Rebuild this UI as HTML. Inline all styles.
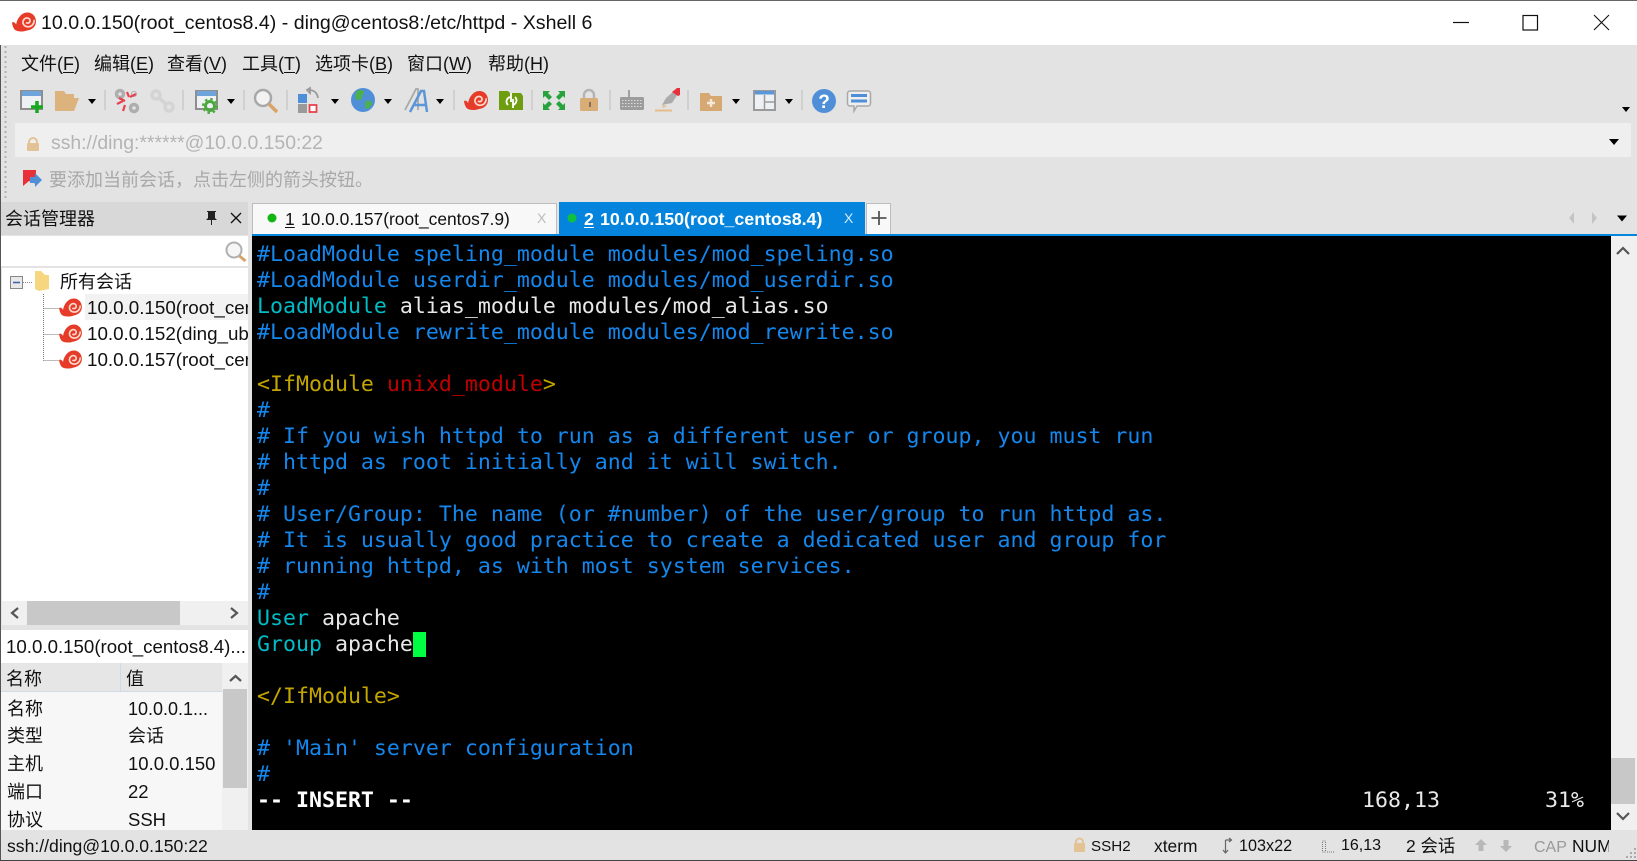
<!DOCTYPE html>
<html><head><meta charset="utf-8"><title>Xshell 6</title>
<style>
html,body{margin:0;padding:0;width:1637px;height:861px;overflow:hidden;background:#e3e3e3}
body{position:relative;font-family:"Liberation Sans","Noto Sans CJK SC",sans-serif;color:#111}
.b{position:absolute}
.t{position:absolute;white-space:nowrap;line-height:26px;height:26px;font-size:18.5px}
.m{font-size:18px}
u{text-underline-offset:2px}
#term{position:absolute;left:252px;top:236px;width:1359px;height:595px;background:#000;overflow:hidden}
#term div{position:absolute;left:5px;height:26px;line-height:26px;white-space:pre;font-family:"DejaVu Sans Mono",monospace;font-size:21.59px;color:#e8e8e8}
#term div.w{left:0;top:2px}
#term .c{color:#1486ec}#term .k{color:#00bcc6}#term .y{color:#c4a600}#term .r{color:#c00000}
</style></head><body>
<div class="b" style="left:0;top:0;width:1637px;height:45px;background:#fff"></div>
<div class="b" style="left:0;top:0;width:1637px;height:1px;background:#666"></div>
<div class="t" style="left:41px;top:10px;font-size:19.6px">10.0.0.150(root_centos8.4) - ding@centos8:/etc/httpd - Xshell 6</div>

<div class="t m" style="left:21px;top:51px">文件(<u>F</u>)</div>
<div class="t m" style="left:94px;top:51px">编辑(<u>E</u>)</div>
<div class="t m" style="left:167px;top:51px">查看(<u>V</u>)</div>
<div class="t m" style="left:242px;top:51px">工具(<u>T</u>)</div>
<div class="t m" style="left:315px;top:51px">选项卡(<u>B</u>)</div>
<div class="t m" style="left:407px;top:51px">窗口(<u>W</u>)</div>
<div class="t m" style="left:488px;top:51px">帮助(<u>H</u>)</div>

<div class="b" style="left:15px;top:123px;width:1616px;height:34px;background:#efefef"></div>
<div class="t" style="left:51px;top:130px;color:#b4b4b4;font-size:19.4px">ssh://ding:******@10.0.0.150:22</div>
<div class="t m" style="left:49px;top:167px;color:#a8a8a8">要添加当前会话，点击左侧的箭头按钮。</div>

<div class="b" style="left:0;top:202px;width:248px;height:33px;background:#d8d8d8"></div>
<div class="t m" style="left:5px;top:206px">会话管理器</div>
<div class="b" style="left:0;top:236px;width:248px;height:30px;background:#fff"></div>
<div class="b" style="left:2px;top:268px;width:246px;height:333px;background:#fff"></div>
<div class="b" style="left:85px;top:294px;width:163px;height:26px;background:#f2f2f2"></div>
<div class="t m" style="left:60px;top:269px">所有会话</div>
<div class="b" style="left:87px;top:295px;width:161px;height:78px;overflow:hidden">
<div class="t" style="left:0;top:0;font-size:18.8px">10.0.0.150(root_centos8.4)</div>
<div class="t" style="left:0;top:26px;font-size:18.8px">10.0.0.152(ding_ubuntu)</div>
<div class="t" style="left:0;top:52px;font-size:18.8px">10.0.0.157(root_centos7.9)</div>
</div>

<div class="b" style="left:2px;top:601px;width:246px;height:24px;background:#f0f0f0"></div>
<div class="b" style="left:27px;top:601px;width:153px;height:24px;background:#c8c8c8"></div>
<div class="b" style="left:0;top:630px;width:248px;height:33px;background:#fff"></div>
<div class="t" style="left:6px;top:634px;font-size:18.7px">10.0.0.150(root_centos8.4)...</div>
<div class="b" style="left:0;top:663px;width:222px;height:29px;background:#e6e6e6;border-bottom:1px solid #d0dbe8;box-sizing:border-box"></div>
<div class="b" style="left:120px;top:663px;width:1px;height:29px;background:#d0dbe8"></div>
<div class="b" style="left:0;top:692px;width:222px;height:138px;background:#f7f7f7"></div>
<div class="b" style="left:222px;top:663px;width:26px;height:167px;background:#f0f0f0"></div>
<div class="b" style="left:223px;top:689px;width:24px;height:99px;background:#c8c8c8"></div>
<div class="t m" style="left:6px;top:666px">名称</div>
<div class="t m" style="left:126px;top:666px">值</div>
<div class="b" style="left:0;top:692px;width:222px;height:138px;overflow:hidden">
<div class="t m" style="left:7px;top:4px">名称</div><div class="t" style="left:128px;top:4px;font-size:18px">10.0.0.1...</div>
<div class="t m" style="left:7px;top:31px">类型</div><div class="t m" style="left:128px;top:31px">会话</div>
<div class="t m" style="left:7px;top:59px">主机</div><div class="t" style="left:128px;top:59px;font-size:18.5px">10.0.0.150</div>
<div class="t m" style="left:7px;top:87px">端口</div><div class="t" style="left:128px;top:87px;font-size:18.5px">22</div>
<div class="t m" style="left:7px;top:115px">协议</div><div class="t" style="left:128px;top:115px;font-size:18.5px">SSH</div>
</div>

<div class="b" style="left:252px;top:203px;width:305px;height:31px;background:#f8f8f8;border:1px solid #bdbdbd;border-bottom:0;box-sizing:border-box"></div>
<div class="t" style="left:285px;top:206px;font-size:17.4px"><u>1</u></div>
<div class="t" style="left:301px;top:206px;font-size:17.4px">10.0.0.157(root_centos7.9)</div>
<div class="t" style="left:537px;top:205px;font-size:14px;color:#bbb">X</div>
<div class="b" style="left:559px;top:202px;width:306px;height:32px;background:#0484dc"></div>
<div class="t" style="left:584px;top:206px;font-size:17.8px;color:#fff;font-weight:bold"><u>2</u></div>
<div class="t" style="left:600px;top:206px;font-size:17.8px;color:#fff;font-weight:bold">10.0.0.150(root_centos8.4)</div>
<div class="t" style="left:844px;top:205px;font-size:14px;color:#d5ebfa">X</div>
<div class="b" style="left:866px;top:203px;width:25px;height:31px;background:#f8f8f8;border:1px solid #bdbdbd;border-bottom:0;box-sizing:border-box"></div>
<div class="b" style="left:252px;top:234px;width:1385px;height:2px;background:#0484dc"></div>

<div id="term"><div class="w">
<div class="c" style="top:4px">#LoadModule speling_module modules/mod_speling.so</div>
<div class="c" style="top:30px">#LoadModule userdir_module modules/mod_userdir.so</div>
<div style="top:56px"><span class="k">LoadModule</span> alias_module modules/mod_alias.so</div>
<div class="c" style="top:82px">#LoadModule rewrite_module modules/mod_rewrite.so</div>
<div style="top:134px"><span class="y">&lt;IfModule</span> <span class="r">unixd_module</span><span class="y">&gt;</span></div>
<div class="c" style="top:160px">#</div>
<div class="c" style="top:186px"># If you wish httpd to run as a different user or group, you must run</div>
<div class="c" style="top:212px"># httpd as root initially and it will switch.</div>
<div class="c" style="top:238px">#</div>
<div class="c" style="top:264px"># User/Group: The name (or #number) of the user/group to run httpd as.</div>
<div class="c" style="top:290px"># It is usually good practice to create a dedicated user and group for</div>
<div class="c" style="top:316px"># running httpd, as with most system services.</div>
<div class="c" style="top:342px">#</div>
<div style="top:368px"><span class="k">User</span> apache</div>
<div style="top:394px"><span class="k">Group</span> apache</div>
<div class="b" style="left:161px;top:394px;width:13px;height:25px;background:#00ff40"></div>
<div class="y" style="top:446px">&lt;/IfModule&gt;</div>
<div class="c" style="top:498px"># 'Main' server configuration</div>
<div class="c" style="top:524px">#</div>
<div style="top:550px;font-weight:bold;color:#fff">-- INSERT --</div>
<div style="top:550px;left:1110px">168,13</div>
<div style="top:550px;left:1293px">31%</div>
</div></div>

<div class="b" style="left:1611px;top:236px;width:26px;height:595px;background:#f0f0f0"></div>
<div class="b" style="left:1611px;top:758px;width:24px;height:46px;background:#c8c8c8"></div>

<div class="b" style="left:0;top:830px;width:1637px;height:31px;background:#e3e3e3;border-bottom:1px solid #444;box-sizing:border-box"></div>
<div class="t" style="left:7px;top:833px;font-size:17.6px">ssh://ding@10.0.0.150:22</div>
<div class="t" style="left:1091px;top:834px;font-size:15.2px">SSH2</div>
<div class="t" style="left:1154px;top:833px;font-size:17.4px">xterm</div>
<div class="t" style="left:1239px;top:833px;font-size:16.2px">103x22</div>
<div class="t" style="left:1341px;top:833px;font-size:16px">16,13</div>
<div class="t" style="left:1406px;top:833px;font-size:17.4px">2 会话</div>
<div class="t" style="left:1534px;top:835px;font-size:16px;color:#999">CAP</div>
<div class="b" style="left:1572px;top:833px;width:37px;height:26px;overflow:hidden"><div class="t" style="left:0;top:0;font-size:17.4px">NUM</div></div>

<svg class="b" style="left:0;top:0" width="1637" height="861" viewBox="0 0 1637 861" xmlns="http://www.w3.org/2000/svg">
<defs>
<symbol id="sn" viewBox="0 0 24 20">
<path fill="#e63b28" d="M0 10.5C1.5 9.5 3 10.5 4.2 12.5 5 7 9 .5 15.5.5 20.5.5 24 4.5 24 9.5 24 14.5 20 18 15 18.5 11 20 5 20 2.5 17.5 1 15.5.3 13 0 10.5Z"/>
<path fill="none" stroke="#ffd9cc" stroke-width="1.700" d="M14 10.5c1.5 1.4 4 .3 4-1.8 0-2.2-2.6-3.5-4.8-2.3-2.5 1.4-3 4.7-1.2 6.7 2.2 2.4 6.3 2.2 8.5-.3 1.3-1.500 1.800-3.300 1.600-5"/>
</symbol>
<polygon id="dd" points="-4,0 4,0 0,5" fill="#000"/>
<g id="sep"><line x1="0" y1="90" x2="0" y2="110" stroke="#bcbcbc"/></g>
</defs>

<!-- title icon -->
<use href="#sn" x="12" y="12" width="24" height="20"/>
<!-- window controls -->
<line x1="1453" y1="22.500" x2="1469" y2="22.500" stroke="#111" stroke-width="1.200"/>
<rect x="1523" y="15.500" width="14.500" height="14.500" fill="none" stroke="#111" stroke-width="1.200"/>
<path d="M1594 15L1609 30M1609 15L1594 30" stroke="#111" stroke-width="1.100" fill="none"/>
<!-- grip -->
<line x1="5.500" y1="46" x2="5.500" y2="198" stroke="#b0b0b0" stroke-width="2" stroke-dasharray="2 3"/>

<!-- toolbar -->
<rect x="21" y="91" width="21" height="18" fill="#eef1f4" stroke="#8e8e8e" stroke-width="2"/>
<rect x="22" y="91" width="19" height="5" fill="#6fa3dc"/>
<path d="M31 107h12M37 101v12" stroke="#16a81e" stroke-width="3.500"/>
<path d="M55 91h9l2 3h8v4h5l-5 13H55z" fill="#dcb27d"/>
<use href="#dd" x="92" y="99"/><use href="#sep" x="105"/>
<g fill="none" stroke="#aeaeae" stroke-width="3.500"><circle cx="120" cy="94" r="3.500"/><circle cx="134" cy="108" r="3.500"/><circle cx="134" cy="94" r="2.500" stroke-width="1"/></g>
<path d="M127 92l2 5M117 104l6-3M130 97l6-3M125 105l-2 6M119 98l6 3" stroke="#e8414e" stroke-width="2.200" fill="none"/>
<g fill="none" stroke="#d4d4d4" stroke-width="3.500"><circle cx="156" cy="95" r="4"/><circle cx="169" cy="107" r="4"/><path d="M159 98l7 6"/></g>
<use href="#sep" x="183"/>
<rect x="196" y="91" width="21" height="18" fill="#eef1f4" stroke="#8e8e8e" stroke-width="2"/>
<rect x="197" y="91" width="19" height="5" fill="#6fa3dc"/>
<circle cx="210" cy="106" r="4.500" fill="none" stroke="#4aa83c" stroke-width="3"/><circle cx="210" cy="106" r="7" fill="none" stroke="#4aa83c" stroke-width="2" stroke-dasharray="2.500 3"/>
<use href="#dd" x="231" y="99"/><use href="#sep" x="244"/>
<circle cx="263" cy="98" r="8" fill="#f2f2f2" stroke="#a8a8a8" stroke-width="2.500"/><path d="M269 104l8 8" stroke="#d8a468" stroke-width="3.500"/>
<use href="#sep" x="287"/>
<rect x="298" y="94" width="9" height="9" fill="#4f8fd8"/><rect x="298" y="104" width="9" height="9" fill="#9a9a9a"/><rect x="309.500" y="105" width="7" height="7" fill="#fff" stroke="#e8414e" stroke-width="1.800"/>
<path d="M309 90c4 0 8 2 9 8M307 90l3-2v5z" fill="none" stroke="#9a9a9a" stroke-width="1.800"/>
<use href="#dd" x="335" y="99"/>
<circle cx="363" cy="100" r="12" fill="#4f8fd8"/><path d="M357 91c3-2 7-1 7 1s-2 3-2 6-5 2-6 1-1-6 1-8zM366 101c3-1 6 0 6 2s-3 6-5 6-3-6-1-8z" fill="#4cb050"/>
<use href="#dd" x="388" y="99"/>
<path d="M405 110L416 89h2v21" fill="none" stroke="#a8a8a8" stroke-width="1.800"/>
<path d="M410 112L421 91h3l3 21M414 105h11" fill="none" stroke="#5b96d8" stroke-width="2.500"/>
<use href="#dd" x="440" y="99"/><use href="#sep" x="454"/>
<use href="#sn" x="464" y="90" width="24" height="21"/>
<path d="M499 91h9l2 2h11l2 3v14h-24z" fill="#6e9d10"/>
<path d="M508 105c-3-3-1-7 2-8M515 97c3 3 1 7-2 8M511 93v9M513 99v9" fill="none" stroke="#fff" stroke-width="1.800"/>
<use href="#sep" x="532"/>
<path d="M543 91h7l-2 2 4 4-3 3-4-4-2 2zM565 91v7l-2-2-4 4-3-3 4-4-2-2zM543 110v-7l2 2 4-4 3 3-4 4 2 2zM565 110h-7l2-2-4-4 3-3 4 4 2-2z" fill="#27a33c"/>
<path d="M584 98v-3a5 5 0 0 1 10 0v3" fill="none" stroke="#b4b4b4" stroke-width="2.500"/>
<rect x="580" y="98" width="18" height="13" rx="1.500" fill="#d9ad78"/><rect x="589" y="102" width="2" height="5" fill="#8a7050"/>
<use href="#sep" x="610"/>
<rect x="620" y="97" width="24" height="13" rx="1.500" fill="#9c9c9c"/><line x1="629" y1="90" x2="629" y2="97" stroke="#8a8a8a" stroke-width="1.500"/>
<path d="M622 100.500h20M622 103.500h20M622 106.500h20" stroke="#dcdcdc" stroke-width="1" stroke-dasharray="1.500 1.500"/>
<path d="M662 105l4-7 8-7 4 3-6 9z" fill="#ababab"/><path d="M672 92l5-4 3 0v7l-2 1z" fill="#e8303a"/>
<line x1="655" y1="110.500" x2="672" y2="110.500" stroke="#e4bd88" stroke-width="2"/><path d="M662 105l5 1-4 2z" fill="#e4bd88"/>
<use href="#sep" x="688"/>
<path d="M700 93h9l2 3h11v15h-22z" fill="#d6a972"/><path d="M711 99v8M707 103h8" stroke="#f5e8d8" stroke-width="2.500"/>
<use href="#dd" x="736" y="99"/>
<rect x="754" y="91" width="21" height="19" fill="#eef1f4" stroke="#9a9a9a" stroke-width="2"/>
<rect x="755" y="91" width="19" height="3.500" fill="#5b96d8"/>
<path d="M764.500 95v14M765 102h9" stroke="#9a9a9a" stroke-width="1.500"/>
<use href="#dd" x="789" y="99"/><use href="#sep" x="802"/>
<circle cx="824" cy="101" r="12" fill="#4f8fd8"/>
<text x="824" y="108" font-family="Liberation Sans,sans-serif" font-weight="bold" font-size="19" fill="#fff" text-anchor="middle">?</text>
<path d="M850 91h18a2.500 2.500 0 0 1 2.500 2.500v10a2.500 2.500 0 0 1-2.500 2.500h-11l-3 5v-5h-4a2.500 2.500 0 0 1-2.500-2.500v-10a2.500 2.500 0 0 1 2.500-2.500z" fill="#eee" stroke="#a8a8a8" stroke-width="1.500"/>
<path d="M851 95.500h16M851 101h16" stroke="#4f8fd8" stroke-width="3"/>
<polygon points="1622,107 1630,107 1626,112" fill="#000"/>
<polygon points="1609,139 1619,139 1614,145" fill="#000"/>
<!-- addr lock -->
<path d="M29 144v-2a4 4 0 0 1 8 0v2" fill="none" stroke="#e3c396" stroke-width="2"/><rect x="27" y="143" width="12" height="8" rx="1" fill="#e3c396"/>
<!-- hint icon -->
<path d="M23 170h13v14l-7-3-6 5z" fill="#e83038"/><path d="M30 177h5v-4l7 7-7 7v-4h-5z" fill="#4f8fd8"/>

<!-- session header -->
<path d="M207 212h9v1h-1v6l2 2h-5v5h-1v-5h-5l2-2v-6h-1z" fill="#222" transform="translate(0,-1)"/>
<path d="M231 213l10 10M241 213l-10 10" stroke="#111" stroke-width="1.300"/>
<!-- search -->
<circle cx="234" cy="250" r="7.500" fill="#f6f6f6" stroke="#b0b0b0" stroke-width="2"/><path d="M239.500 256l6 5" stroke="#d8a468" stroke-width="3"/>
<!-- tree -->
<rect x="10.500" y="276.500" width="12" height="12" fill="#e8e8e8" stroke="#888"/><line x1="13" y1="282.500" x2="20" y2="282.500" stroke="#3a5ea8" stroke-width="1.500"/>
<line x1="23" y1="282.500" x2="33" y2="282.500" stroke="#888" stroke-dasharray="1 1"/>
<path d="M35 271h6l4 4h4v14l-10 2-4-2z" fill="#f6d77f"/>
<path d="M43.500 294v66.500M43.500 308.500h16M43.500 334.500h16M43.500 360.500h16" stroke="#777" stroke-dasharray="1 1" fill="none"/>
<use href="#sn" x="59" y="298" width="23" height="19"/>
<use href="#sn" x="59" y="324" width="23" height="19"/>
<use href="#sn" x="59" y="350" width="23" height="19"/>
<!-- tab dots -->
<circle cx="272" cy="218" r="4.500" fill="#13b513"/><circle cx="572" cy="218" r="4.500" fill="#10c040"/>
<path d="M876 218h15M883.500 211v14" stroke="#555" stroke-width="1.800" transform="translate(-4.500,0)"/>
<polygon points="1574,212 1574,224 1569,218" fill="#c4c4c4"/><polygon points="1592,212 1592,224 1597,218" fill="#c4c4c4"/>
<polygon points="1617,215.500 1627,215.500 1622,221.500" fill="#000"/>
<!-- h scroll arrows -->
<path d="M18 608l-6 5 6 5M231 608l6 5-6 5" fill="none" stroke="#555" stroke-width="2.200"/>
<!-- v scroll arrows -->
<path d="M230 681l5.500-5 5.500 5" fill="none" stroke="#555" stroke-width="2.200"/>
<path d="M1617 254l6-6 6 6M1617 813l6 6 6-6" fill="none" stroke="#555" stroke-width="2.200"/>
<!-- status icons -->
<path d="M1076 844v-2a3.500 3.500 0 0 1 7 0v2" fill="none" stroke="#e3c396" stroke-width="2"/><rect x="1074" y="843" width="11" height="9" rx="1" fill="#e3c396"/>
<path d="M1225.500 840v13M1223 850l2.500 3 2.500-3M1225.500 840h6M1229 838l2.500 2-2.500 2" fill="none" stroke="#666" stroke-width="1.200"/>
<path d="M1322.500 841h3v11h-3zM1327 852h7" fill="none" stroke="#777" stroke-dasharray="1 1"/>
<path d="M1481 839l-6 6h3.500v6h5v-6h3.500zM1506 852l-6-6h3.500v-6h5v6h3.500z" fill="#b8b8b8"/>
<path d="M1634 848h2v2h-2zM1630 852h2v2h-2zM1634 852h2v2h-2zM1626 856h2v2h-2zM1630 856h2v2h-2zM1634 856h2v2h-2z" fill="#aaa"/>
<!-- left border -->
<line x1="0.500" y1="45" x2="0.500" y2="860" stroke="#555"/>
</svg>
</body></html>
